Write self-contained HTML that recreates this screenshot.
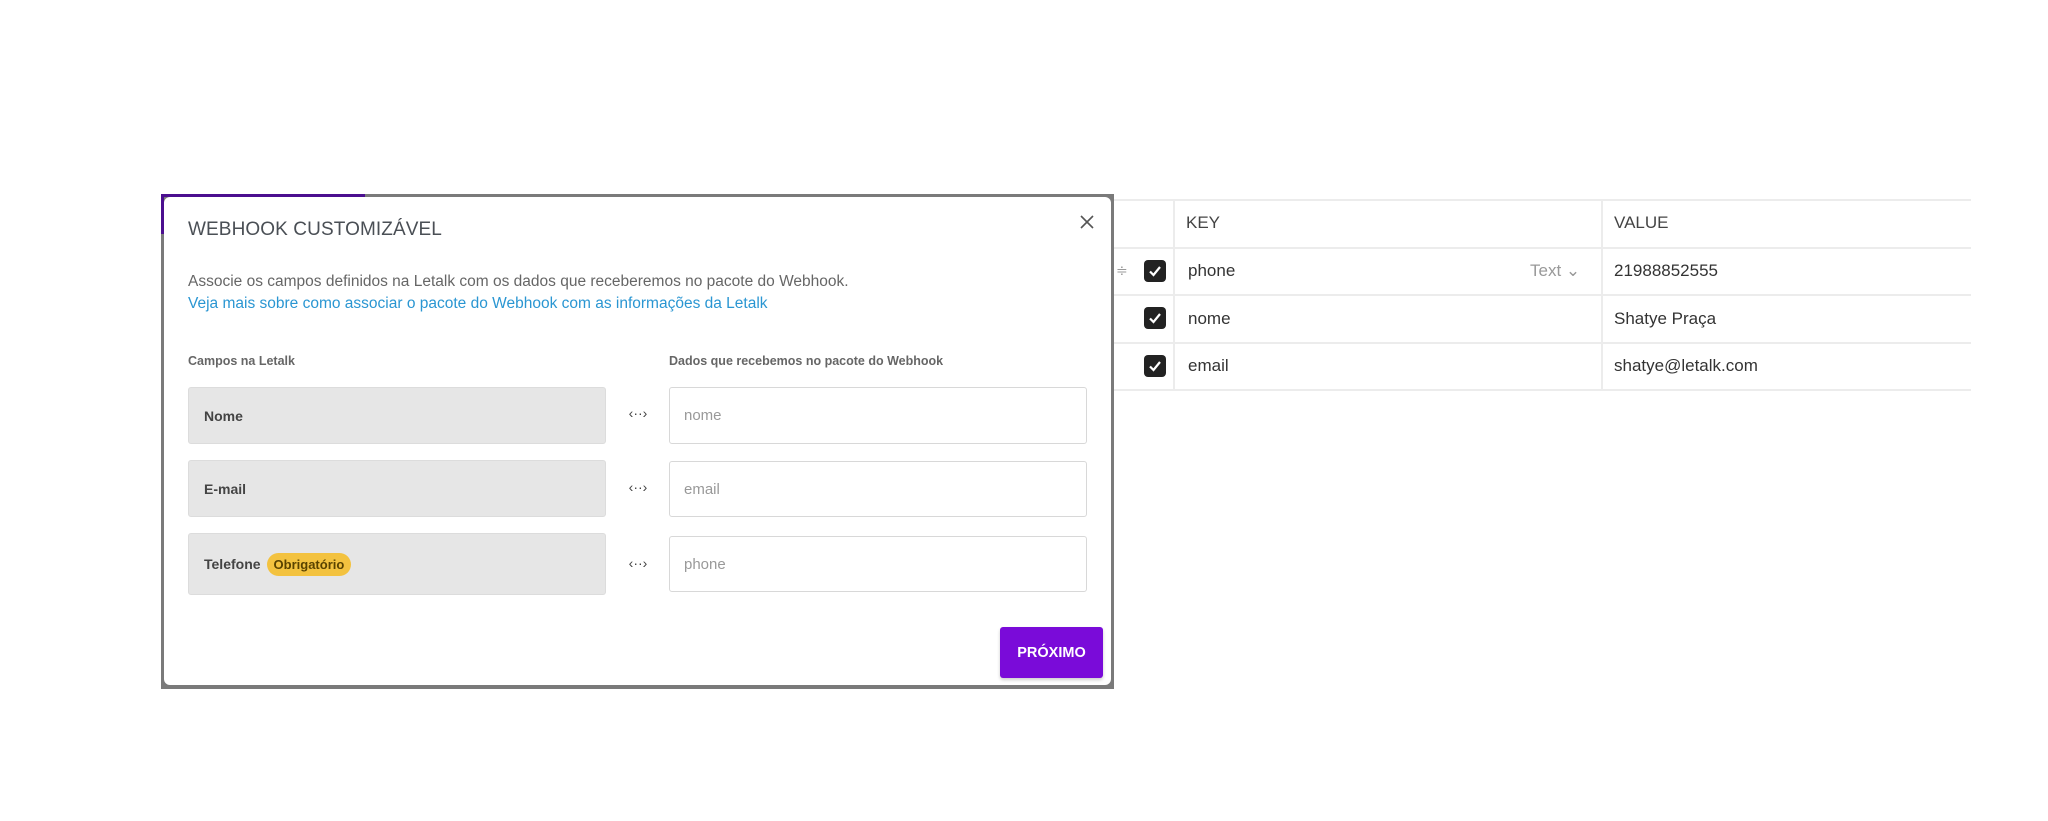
<!DOCTYPE html>
<html><head><meta charset="utf-8"><style>
*{margin:0;padding:0;box-sizing:border-box}
body{width:2048px;height:821px;background:#fff;font-family:"Liberation Sans",sans-serif;position:relative;overflow:hidden}
.a{position:absolute}
.frame{left:161px;top:194px;width:953px;height:495px;background:#7a7a7a}
.purp{left:161px;top:194px;width:204px;height:3px;background:#4b0f8f}
.purpl{left:161px;top:194px;width:3px;height:40px;background:#4b0f8f}
.modal{left:164px;top:197px;width:947px;height:488px;background:#fff;border-radius:6px}
.t{color:#4a4f55}
.lbox{left:188px;width:418px;background:#e6e6e6;border:1px solid #dcdcdc;border-radius:3px;font-weight:bold;font-size:14px;color:#444;padding-left:15px;display:flex;align-items:center}
.inp{left:669px;width:418px;background:#fff;border:1.5px solid #d8d8d8;border-radius:3px;font-size:15px;color:#999;padding-left:14px;display:flex;align-items:center}
.ic{left:627px;font-size:14px;color:#444;width:22px;text-align:center}
.line{background:#ececec;height:2px}
.cb{left:1144px;width:22px;height:22px;background:#222;border-radius:4px}
.cb svg{position:absolute;left:3px;top:3px}
.tx{font-size:17px;color:#333}
</style></head><body>
<div class="a frame"></div>
<div class="a purp"></div>
<div class="a purpl"></div>
<div class="a modal"></div>
<div class="a t" style="left:188px;top:219px;font-size:19px;letter-spacing:0.1px">WEBHOOK CUSTOMIZÁVEL</div>
<svg class="a" style="left:1080px;top:215px" width="14" height="14" viewBox="0 0 14 14"><path d="M1 1L13 13M13 1L1 13" stroke="#555" stroke-width="1.6"/></svg>
<div class="a" style="left:188px;top:273px;font-size:15.5px;color:#666">Associe os campos definidos na Letalk com os dados que receberemos no pacote do Webhook.</div>
<div class="a" style="left:188px;top:295px;font-size:15.5px;color:#2a96d2">Veja mais sobre como associar o pacote do Webhook com as informações da Letalk</div>
<div class="a" style="left:188px;top:354px;font-size:12.5px;font-weight:bold;color:#666">Campos na Letalk</div>
<div class="a" style="left:669px;top:354px;font-size:12.5px;font-weight:bold;color:#666">Dados que recebemos no pacote do Webhook</div>

<div class="a lbox" style="top:387px;height:57px">Nome</div>
<div class="a lbox" style="top:460px;height:57px">E-mail</div>
<div class="a lbox" style="top:533px;height:62px">Telefone <span style="margin-left:6px;background:#f3c23f;color:#5a4300;border-radius:12px;padding:4px 7px;font-size:13px">Obrigatório</span></div>

<div class="a ic" style="top:405px">‹··›</div>
<div class="a ic" style="top:479px">‹··›</div>
<div class="a ic" style="top:555px">‹··›</div>

<div class="a inp" style="top:387px;height:57px">nome</div>
<div class="a inp" style="top:461px;height:56px">email</div>
<div class="a inp" style="top:536px;height:56px">phone</div>

<div class="a" style="left:1000px;top:627px;width:103px;height:51px;background:#7a0bd9;border-radius:3px;color:#fff;font-weight:bold;font-size:14.5px;display:flex;align-items:center;justify-content:center;box-shadow:0 2px 3px rgba(0,0,0,.2)">PRÓXIMO</div>

<div class="a line" style="left:1114px;top:199px;width:857px"></div>
<div class="a line" style="left:1114px;top:247px;width:857px"></div>
<div class="a line" style="left:1114px;top:294px;width:857px"></div>
<div class="a line" style="left:1114px;top:342px;width:857px"></div>
<div class="a line" style="left:1114px;top:389px;width:857px"></div>
<div class="a" style="left:1173px;top:199px;width:2px;height:191px;background:#ececec"></div>
<div class="a" style="left:1601px;top:199px;width:2px;height:191px;background:#ececec"></div>
<div class="a tx" style="left:1186px;top:213px;color:#444">KEY</div>
<div class="a tx" style="left:1614px;top:213px;color:#444">VALUE</div>
<div class="a" style="left:1116px;top:262px;font-size:14px;color:#999">≑</div>
<div class="a cb" style="top:260px"><svg width="16" height="16" viewBox="0 0 16 16"><path d="M3 8.5L6.5 12L13 4" stroke="#fff" stroke-width="2.2" fill="none"/></svg></div>
<div class="a cb" style="top:307px"><svg width="16" height="16" viewBox="0 0 16 16"><path d="M3 8.5L6.5 12L13 4" stroke="#fff" stroke-width="2.2" fill="none"/></svg></div>
<div class="a cb" style="top:355px"><svg width="16" height="16" viewBox="0 0 16 16"><path d="M3 8.5L6.5 12L13 4" stroke="#fff" stroke-width="2.2" fill="none"/></svg></div>
<div class="a tx" style="left:1188px;top:261px">phone</div>
<div class="a tx" style="left:1530px;top:261px;color:#999">Text ⌄</div>
<div class="a tx" style="left:1614px;top:261px">21988852555</div>
<div class="a tx" style="left:1188px;top:309px">nome</div>
<div class="a tx" style="left:1614px;top:309px">Shatye Praça</div>
<div class="a tx" style="left:1188px;top:356px">email</div>
<div class="a tx" style="left:1614px;top:356px">shatye@letalk.com</div>
</body></html>
